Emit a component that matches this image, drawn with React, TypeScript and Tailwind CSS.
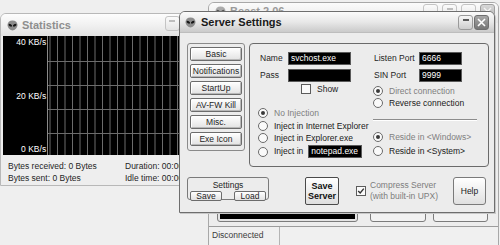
import React from "react";

const Alien = () => (
  <svg width="11" height="11" viewBox="0 0 11 11">
    <path d="M5.5 0.6 C8.6 0.6 10.5 2.6 10.5 5 C10.5 7.6 7.6 10.5 5.5 10.5 C3.4 10.5 0.5 7.6 0.5 5 C0.5 2.6 2.4 0.6 5.5 0.6Z" fill="#8c8c8c" />
    <ellipse cx="3.3" cy="5.3" rx="1.9" ry="1.1" transform="rotate(30 3.3 5.3)" fill="#151515" />
    <ellipse cx="7.7" cy="5.3" rx="1.9" ry="1.1" transform="rotate(-30 7.7 5.3)" fill="#151515" />
  </svg>
);

const MinBtn = ({ faded = false }: { faded?: boolean }) => (
  <div
    className={
      faded
        ? "w-[15px] h-[15px] rounded-[3px] border border-[#c4c4c4] bg-linear-to-b from-[#fbfbfb] to-[#e4e4e4] flex justify-center pt-[3px]"
        : "w-[15px] h-[15px] rounded-[3px] border border-[#9a9a9a] bg-linear-to-b from-[#f7f7f7] to-[#cdcdcd] flex justify-center pt-[3px]"
    }
  >
    <div className={faded ? "w-[6px] h-[2px] bg-[#bdbdbd]" : "w-[6px] h-[2px] bg-[#5a5a5a]"} />
  </div>
);

const CloseBtn = () => (
  <div className="w-[15px] h-[15px] rounded-[3px] border border-[#6f6f6f] bg-linear-to-b from-[#a8a8a8] to-[#767676] flex items-center justify-center">
    <svg width="9" height="9" viewBox="0 0 9 9">
      <path d="M1 1 L8 8 M8 1 L1 8" stroke="#ffffff" strokeWidth="1.6" />
    </svg>
  </div>
);

const TabBtn = ({ label }: { label: string }) => (
  <div className="w-[52px] h-[14px] rounded-[2px] border border-[#6c6c6c] bg-linear-to-b from-[#ffffff] to-[#e2e2e2] shadow-[inset_1px_1px_0_#ffffff,inset_-1px_-1px_0_#b8b8b8] flex items-center justify-center leading-none text-[#1e1e1e]">
    {label}
  </div>
);

const Radio = ({ checked = false, label, dim = false }: { checked?: boolean; label: string; dim?: boolean }) => (
  <div className="flex items-center h-[10px] gap-[6px]">
    <div className="w-[10px] h-[10px] rounded-full border border-[#6a6a6a] bg-[#fafafa] flex items-center justify-center shrink-0">
      {checked && <div className="w-[4px] h-[4px] rounded-full bg-[#3a3a3a]" />}
    </div>
    <span className={dim ? "text-[#808080] leading-none whitespace-nowrap" : "text-[#1a1a1a] leading-none whitespace-nowrap"}>{label}</span>
  </div>
);

const BlackInput = ({ value, w }: { value: string; w: string }) => (
  <div className={"h-[13px] bg-black border border-[#5a5a5a] text-white leading-[11px] pl-[2px] overflow-hidden whitespace-nowrap " + w}>
    {value}
  </div>
);

export default function App() {
  const vLines: number[] = [];
  for (let i = 0; i < 21; i++) vLines.push(2 + i * 7.5);
  return (
    <div className="relative w-[500px] h-[245px] overflow-hidden bg-[#efefef] font-['Liberation_Sans',Arial,sans-serif] text-[8.5px] text-[#1e1e1e]">
      {/* Background main window (Beast) */}
      <div className="absolute left-[208px] top-[2px] w-[291px] h-[245px] border border-[#a8a8a8] rounded-t-[6px] bg-[#ededed] flex flex-col">
        <div className="h-[20px] rounded-t-[5px] bg-linear-to-b from-[#fbfbfb] to-[#e6e6e6] flex items-start">
          <div className="ml-[6px] mt-[3px] opacity-70">
            <Alien />
          </div>
          <span className="ml-[4px] mt-[2px] text-[11px] leading-[13px] font-bold text-[#9a9a9a]">Beast 2.06</span>
          <div className="ml-auto mr-[3px] mt-[1px] flex gap-[4px]">
            <div className="w-[15px] h-[15px] rounded-[3px] border border-[#c4c4c4] bg-linear-to-b from-[#fbfbfb] to-[#e4e4e4]" />
            <MinBtn faded />
            <div className="w-[15px] h-[15px] rounded-[3px] border border-[#c4c4c4] bg-linear-to-b from-[#fbfbfb] to-[#e4e4e4]" />
            <div className="w-[15px] h-[15px] rounded-[3px] border border-[#a0a0a0] bg-linear-to-b from-[#d8d8d8] to-[#b4b4b4] flex items-center justify-center">
              <svg width="9" height="9" viewBox="0 0 9 9">
                <path d="M1 1 L8 8 M8 1 L1 8" stroke="#f4f4f4" strokeWidth="1.4" />
              </svg>
            </div>
          </div>
        </div>
        <div className="flex-1 flex flex-col justify-end">
          <div className="flex items-end mb-[4px] ml-[8px]">
            <div className="w-[141px] h-[20px] rounded-[3px] border border-[#7c7c7c] bg-[#e4e4e4] p-[2px]">
              <div className="w-full h-full bg-black" />
            </div>
            <div className="ml-[12px] w-[56px] h-[20px] rounded-[3px] border border-[#7c7c7c] bg-[#f2f2f2]" />
            <div className="ml-[7px] w-[55px] h-[20px] rounded-[3px] border border-[#7c7c7c] bg-[#f2f2f2]" />
          </div>
        </div>
        <div className="h-[20px] border-t border-[#9c9c9c] bg-[#f0f0f0] flex">
          <div className="w-[71px] border-r border-[#b4b4b4] pl-[3px] pt-[4px] text-[#3c3c3c] leading-none">Disconnected</div>
        </div>
      </div>

      {/* Statistics window */}
      <div className="absolute left-0 top-[13px] w-[206px] h-[173px] border border-[#b8b8b8] rounded-t-[6px] bg-[#eeeeee] flex flex-col">
        <div className="h-[22px] rounded-t-[5px] bg-linear-to-b from-[#fdfdfd] via-[#f1f1f1] to-[#e2e2e2] flex items-center">
          <div className="ml-[6px]">
            <Alien />
          </div>
          <span className="ml-[4px] text-[11px] font-bold text-[#8e8e8e]">Statistics</span>
          <div className="ml-[94px] mt-[-3px]">
            <MinBtn faded />
          </div>
        </div>
        <div className="ml-[2px] h-[119px] bg-black flex">
          <div className="w-[46px] border-r border-[#8a8a8a] flex flex-col justify-between items-end pr-[1px] pt-[2px] pb-[1px] text-white leading-[9px]">
            <span>40 KB/s</span>
            <span>20 KB/s</span>
            <span>0 KB/s</span>
          </div>
          <svg width="160" height="119" className="block">
            {vLines.map((x) => (
              <line key={x} x1={x} y1={0} x2={x} y2={119} stroke="#6c6c6c" strokeWidth="1" />
            ))}
            {[25, 49, 73, 97].map((y) => (
              <line key={y} x1={0} y1={y + 0.5} x2={160} y2={y + 0.5} stroke="#6c6c6c" strokeWidth="1" />
            ))}
          </svg>
        </div>
        <div className="pl-[7px] pt-[5px] grid grid-cols-[117px_1fr] leading-[12px] text-[#1e1e1e] whitespace-nowrap">
          <span>Bytes received: 0 Bytes</span>
          <span>Duration: 00:00</span>
          <span>Bytes sent: 0 Bytes</span>
          <span>Idle time: 00:00</span>
        </div>
      </div>

      {/* Server Settings window */}
      <div className="absolute left-[179px] top-[11px] w-[316px] h-[202px] border border-[#6e6e6e] rounded-t-[6px] bg-[#ececec] flex flex-col shadow-[1px_1px_0_#c8c8c8]">
        <div className="h-[21px] rounded-t-[5px] bg-linear-to-b from-[#fbfbfb] via-[#e8e8e8] to-[#cacaca] flex items-center border-b border-[#bdbdbd]">
          <div className="ml-[5px]">
            <Alien />
          </div>
          <span className="ml-[5px] text-[11px] font-bold text-[#1a1a1a]">Server Settings</span>
          <div className="ml-auto mr-[5px] flex gap-[1px]">
            <MinBtn />
            <CloseBtn />
          </div>
        </div>
        <div className="pl-[7px] pt-[10px] flex flex-col">
          {/* Row 1 */}
          <div className="flex h-[124px]">
            <div className="w-[58px] h-[108px] rounded-[3px] border border-[#8a8a8a] pt-[3px] pl-[2px] flex flex-col gap-[3px]">
              <TabBtn label="Basic" />
              <TabBtn label="Notifications" />
              <TabBtn label="StartUp" />
              <TabBtn label="AV-FW Kill" />
              <TabBtn label="Misc." />
              <TabBtn label="Exe Icon" />
            </div>
            <div className="ml-[4px] w-[240px] h-[124px] border border-[#6a6a6a] rounded-[4px] flex">
              {/* left column */}
              <div className="ml-[8px] w-[114px] flex flex-col">
                <div className="mt-[8px] h-[13px] flex items-center">
                  <span className="ml-[2px] w-[28px] leading-none">Name</span>
                  <BlackInput value="svchost.exe" w="w-[63px]" />
                </div>
                <div className="mt-[4px] h-[13px] flex items-center">
                  <span className="ml-[2px] w-[28px] leading-none">Pass</span>
                  <BlackInput value="" w="w-[63px]" />
                </div>
                <div className="mt-[2px] h-[10px] flex items-center">
                  <div className="ml-[43px] w-[10px] h-[10px] border border-[#5c5c5c] bg-[#fafafa]" />
                  <span className="ml-[6px] leading-none">Show</span>
                </div>
                <div className="mt-[14px]">
                  <Radio checked dim label="No Injection" />
                </div>
                <div className="mt-[3px]">
                  <Radio label="Inject in Internet Explorer" />
                </div>
                <div className="mt-[2px]">
                  <Radio label="Inject in Explorer.exe" />
                </div>
                <div className="mt-[2px] h-[13px] flex items-center">
                  <Radio label="Inject in" />
                  <div className="ml-[5px]">
                    <BlackInput value="notepad.exe" w="w-[54px]" />
                  </div>
                </div>
              </div>
              {/* right column */}
              <div className="flex flex-col">
                <div className="mt-[8px] h-[13px] flex items-center">
                  <span className="ml-[2px] w-[45px] leading-none whitespace-nowrap">Listen Port</span>
                  <BlackInput value="6666" w="w-[43px]" />
                </div>
                <div className="mt-[4px] h-[13px] flex items-center">
                  <span className="ml-[2px] w-[45px] leading-none whitespace-nowrap">SIN Port</span>
                  <BlackInput value="9999" w="w-[43px]" />
                </div>
                <div className="mt-[4px] ml-[1px]">
                  <Radio checked dim label="Direct connection" />
                </div>
                <div className="mt-[2px] ml-[1px]">
                  <Radio label="Reverse connection" />
                </div>
                <div className="mt-[11px] ml-[1px] w-[104px] h-[2px] border-t border-[#8c8c8c] border-b border-b-white" />
                <div className="mt-[11px] ml-[1px]">
                  <Radio checked dim label="Reside in <Windows>" />
                </div>
                <div className="mt-[4px] ml-[1px]">
                  <Radio label="Reside in <System>" />
                </div>
              </div>
            </div>
          </div>
          {/* Row 2 */}
          <div className="mt-[10px] flex items-start">
            <div className="w-[82px] h-[23px] rounded-[3px] border border-[#7a7a7a] flex flex-col items-center">
              <span className="mt-[2px] leading-[10px]">Settings</span>
              <div className="mt-[1px] w-full flex justify-between px-[2px]">
                <div className="w-[32px] h-[10px] rounded-[2px] border border-[#6c6c6c] bg-linear-to-b from-white to-[#e2e2e2] flex items-center justify-center leading-none">Save</div>
                <div className="w-[32px] h-[10px] rounded-[2px] border border-[#6c6c6c] bg-linear-to-b from-white to-[#e2e2e2] flex items-center justify-center leading-none">Load</div>
              </div>
            </div>
            <div className="ml-[36px] w-[34px] h-[28px] rounded-[2px] border-[1.5px] border-[#4a4a4a] bg-linear-to-b from-white to-[#dedede] flex flex-col items-center justify-center text-[9px] font-bold leading-[10px] text-[#111]">
              <span>Save</span>
              <span>Server</span>
            </div>
            <div className="ml-[17px] w-[97px] h-[28px] flex items-center">
              <div className="w-[10px] h-[10px] border border-[#5c5c5c] bg-[#fafafa] flex items-center justify-center shrink-0">
                <svg width="8" height="8" viewBox="0 0 8 8">
                  <path d="M1.2 4 L3.2 6 L6.8 1.6" stroke="#333" strokeWidth="1.4" fill="none" />
                </svg>
              </div>
              <div className="ml-[4px] flex flex-col leading-[11px] text-[#7c7c7c] whitespace-nowrap">
                <span>Compress Server</span>
                <span>(with built-in UPX)</span>
              </div>
            </div>
            <div className="w-[33px] h-[28px] rounded-[3px] border border-[#7a7a7a] bg-linear-to-b from-white to-[#e0e0e0] flex items-center justify-center leading-none text-[#1a1a1a]">
              Help
            </div>
          </div>
        </div>
      </div>
    </div>
  );
}
